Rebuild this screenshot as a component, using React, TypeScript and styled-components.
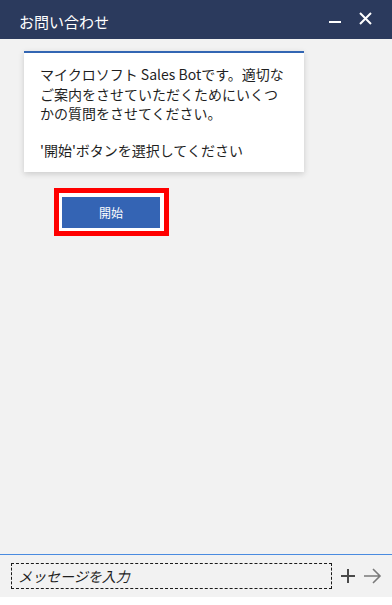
import React from "react";
import styled, { createGlobalStyle } from "styled-components";

const Global = createGlobalStyle`
  html, body { margin: 0; padding: 0; background: #ffffff; }
  body { font-family: "Noto Sans CJK JP", "Noto Sans", sans-serif; }
  * { box-sizing: border-box; }
`;

const Widget = styled.div`
  width: 392px;
  height: 597px;
  display: flex;
  flex-direction: column;
  background: #f2f2f2;
  box-shadow: 0 2px 6px rgba(0, 0, 0, 0.22);
`;

const Header = styled.div`
  height: 39px;
  flex: none;
  background: #2b3a5d;
  display: flex;
  align-items: center;
  padding: 0 20px 0 19px;
  color: #ffffff;
`;

const Title = styled.div`
  flex: 1;
  font-size: 15px;
  line-height: 20px;
  padding-top: 4px;
`;

const HeaderButtons = styled.div`
  display: flex;
  align-items: center;
  gap: 17px;
  padding-bottom: 2px;
`;

const IconBtn = styled.span`
  display: flex;
  width: 13px;
  height: 13px;
`;

const Content = styled.div`
  flex: 1;
  padding: 12px 0 0 0;
  display: flex;
  flex-direction: column;
  align-items: flex-start;
`;

const Card = styled.div`
  margin-left: 24px;
  width: 280px;
  background: #ffffff;
  border-top: 2px solid #3366b3;
  box-shadow: 0 2px 6px rgba(0, 0, 0, 0.16);
  padding: 12px 14px 12px 16px;
  color: #1f1f1f;
  font-size: 14px;
  line-height: 19.5px;
`;

const Para = styled.p`
  margin: 0;
`;

const Spacer = styled.div`
  height: 17px;
`;

const FocusFrame = styled.div`
  margin: 16px 0 0 54px;
  border: 5px solid #ff0000;
  padding: 4px 4px 3px 3px;
  background: #ffffff;
  display: flex;
`;

const StartButton = styled.button`
  width: 98px;
  height: 31px;
  border: none;
  background: #3464b4;
  color: #ffffff;
  font-family: "Noto Sans CJK JP", sans-serif;
  font-size: 12px;
  padding: 0;
  cursor: pointer;
`;

const Footer = styled.div`
  flex: none;
  border-top: 1px solid #4a8be0;
  padding: 8px 10px 8px 11px;
  display: flex;
  align-items: center;
`;

const InputBox = styled.div`
  width: 322px;
  height: 26px;
  border: 1px dashed #1a1a1a;
  display: flex;
  align-items: center;
  padding-left: 6px;
  font-size: 14px;
  font-style: italic;
  color: #1f1f1f;
`;

const FooterIcons = styled.div`
  display: flex;
  align-items: center;
  margin-left: 8px;
  gap: 7px;
`;

export default function App() {
  return (
    <>
      <Global />
      <Widget>
        <Header>
          <Title>お問い合わせ</Title>
          <HeaderButtons>
            <IconBtn>
              <svg width="13" height="13" viewBox="0 0 13 13">
                <rect x="0" y="9" width="12" height="2" fill="#ffffff" />
              </svg>
            </IconBtn>
            <IconBtn>
              <svg width="13" height="13" viewBox="0 0 13 13">
                <path d="M1 1 L12 12 M12 1 L1 12" stroke="#ffffff" strokeWidth="2" />
              </svg>
            </IconBtn>
          </HeaderButtons>
        </Header>
        <Content>
          <Card>
            <Para>マイクロソフト Sales Botです。適切なご案内をさせていただくためにいくつかの質問をさせてください。</Para>
            <Spacer />
            <Para>'開始'ボタンを選択してください</Para>
          </Card>
          <FocusFrame>
            <StartButton>開始</StartButton>
          </FocusFrame>
        </Content>
        <Footer>
          <InputBox>メッセージを入力</InputBox>
          <FooterIcons>
            <svg width="16" height="16" viewBox="0 0 16 16">
              <path d="M8 1 V15 M1 8 H15" stroke="#4a4a4a" strokeWidth="2" />
            </svg>
            <svg width="19" height="16" viewBox="0 0 19 16">
              <path d="M1 8 H17 M10 1 L17 8 L10 15" stroke="#7a7a7a" strokeWidth="1.6" fill="none" />
            </svg>
          </FooterIcons>
        </Footer>
      </Widget>
    </>
  );
}
